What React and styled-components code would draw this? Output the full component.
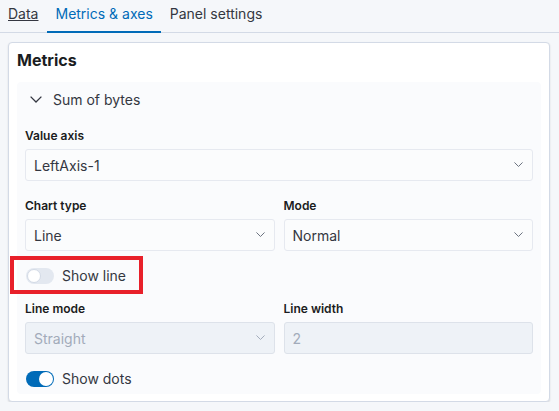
import React from "react";
import styled, { createGlobalStyle } from "styled-components";

const GlobalStyle = createGlobalStyle`
  body {
    margin: 0;
    background: #f5f7fa;
    font-family: Inter, "Noto Sans", sans-serif;
    color: #343741;
    font-size: 14px;
  }
`;

const TabBar = styled.div`
  display: flex;
  height: 33px;
  box-sizing: border-box;
  border-bottom: 1px solid #d3dae6;
`;

const Tab = styled.div`
  display: flex;
  align-items: center;
  height: 33px;
  box-sizing: border-box;
  padding: 0 8.5px 5px;
  font-size: 14px;
  color: ${(p) => (p.active ? "#006bb8" : "#343741")};
  border-bottom: 2px solid ${(p) => (p.active ? "#006bb8" : "transparent")};
  margin-bottom: -1px;
  text-decoration: ${(p) => (p.link ? "underline" : "none")};
  &:first-child {
    padding-left: 8px;
  }
`;

const Panel = styled.div`
  margin: 9px 9px 0 8px;
  height: 360px;
  box-sizing: border-box;
  background: #fff;
  border: 1px solid #d3dae6;
  border-radius: 4px;
  box-shadow: 0 1px 2px rgba(0, 0, 0, 0.12);
  padding: 5px 8px 8px;
  display: flex;
  flex-direction: column;
`;

const Title = styled.h2`
  margin: 0 0 10px;
  font-size: 16px;
  line-height: 24px;
  font-weight: 700;
  color: #1a1c21;
`;

const Accordion = styled.div`
  flex: 1;
  background: #fafbfd;
  border-radius: 4px;
  padding: 0 8px 7px;
`;

const AccordionHeader = styled.div`
  display: flex;
  align-items: center;
  height: 35px;
  gap: 11px;
  padding-left: 5px;
  font-size: 14px;
  color: #343741;
`;

const Content = styled.div`
  display: flex;
  flex-direction: column;
  gap: 16px;
  padding-top: 10px;
`;

const Row = styled.div`
  display: grid;
  grid-template-columns: 1fr 1fr;
  gap: 9px;
`;

const Field = styled.div`
  display: flex;
  flex-direction: column;
  gap: 4px;
  min-width: 0;
`;

const Label = styled.label`
  font-size: 12px;
  line-height: 18px;
  font-weight: 600;
  color: #1a1c21;
`;

const SelectBox = styled.div`
  display: flex;
  align-items: center;
  justify-content: space-between;
  height: 32px;
  box-sizing: border-box;
  padding: 0 9px 0 8px;
  border: 1px solid ${(p) => (p.disabled ? "#dde2ea" : "#e6e9f0")};
  border-radius: 3px;
  background: ${(p) => (p.disabled ? "#eef2f7" : "#fbfcfd")};
  color: ${(p) => (p.disabled ? "#a2abba" : "#343741")};
  font-size: 14px;
`;

const Chevron = ({ size = 9, color = "#69707d" }) => (
  <svg width={size} height={size * 0.6} viewBox="0 0 10 6" fill="none">
    <path d="M0.5 0.5 L5 5 L9.5 0.5" stroke={color} strokeWidth="1.1" />
  </svg>
);

const Select = ({ value, disabled, chevron = true }) => (
  <SelectBox disabled={disabled}>
    <span>{value}</span>
    {chevron && <Chevron color={disabled ? "#a2abba" : "#69707d"} />}
  </SelectBox>
);

const SwitchRow = styled.div`
  position: relative;
  display: flex;
  align-items: center;
  gap: 8px;
  height: 17px;
  padding-left: 1px;
  font-size: 14px;
  color: #343741;
`;

const Highlight = styled.div`
  position: absolute;
  left: -15px;
  top: -11px;
  width: 133px;
  height: 38px;
  box-sizing: border-box;
  border: 4px solid #e8202a;
  pointer-events: none;
`;

const Track = styled.span`
  position: relative;
  width: 28px;
  height: 16px;
  border-radius: 8px;
  background: ${(p) => (p.on ? "#006bb8" : "#e3e8f0")};
  flex-shrink: 0;
`;

const Thumb = styled.span`
  position: absolute;
  top: 1px;
  left: ${(p) => (p.on ? "13px" : "1px")};
  width: 14px;
  height: 14px;
  border-radius: 50%;
  background: #fff;
  box-sizing: border-box;
  border: ${(p) => (p.on ? "none" : "1px solid #d3dae6")};
`;

const Switch = ({ on, label, highlight }) => (
  <SwitchRow>
    <Track on={on}>
      <Thumb on={on} />
    </Track>
    <span>{label}</span>
    {highlight && <Highlight />}
  </SwitchRow>
);

export default function App() {
  return (
    <>
      <GlobalStyle />
      <TabBar>
        <Tab link>Data</Tab>
        <Tab active>Metrics &amp; axes</Tab>
        <Tab>Panel settings</Tab>
      </TabBar>
      <Panel>
        <Title>Metrics</Title>
        <Accordion>
          <AccordionHeader>
            <Chevron size={12} color="#343741" />
            <span>Sum of bytes</span>
          </AccordionHeader>
          <Content>
            <Field>
              <Label>Value axis</Label>
              <Select value="LeftAxis-1" />
            </Field>
            <Row>
              <Field>
                <Label>Chart type</Label>
                <Select value="Line" />
              </Field>
              <Field>
                <Label>Mode</Label>
                <Select value="Normal" />
              </Field>
            </Row>
            <Switch label="Show line" highlight />
            <Row>
              <Field>
                <Label>Line mode</Label>
                <Select value="Straight" disabled />
              </Field>
              <Field>
                <Label>Line width</Label>
                <Select value="2" disabled chevron={false} />
              </Field>
            </Row>
            <Switch label="Show dots" on />
          </Content>
        </Accordion>
      </Panel>
    </>
  );
}
